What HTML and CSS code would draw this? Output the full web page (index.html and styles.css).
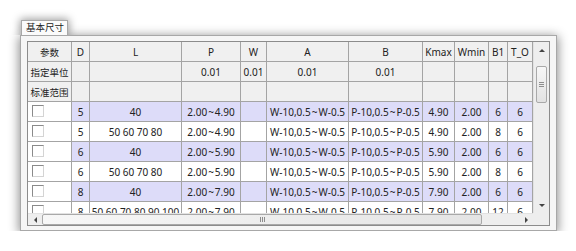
FILE: index.html
```html
<!DOCTYPE html>
<html>
  <head>
    <meta charset="utf-8">
    <title>基本尺寸</title>
    <link rel="stylesheet" href="styles.css">
  </head>
  <body>
    <div class="window">
      <div class="tab">基本尺寸</div>
      <div class="panel">
        <div class="view">
          <div class="cells">
            <table>
              <colgroup>
                <col class="c-chk"><col class="c-d"><col class="c-l"><col class="c-p"><col class="c-w"><col class="c-a">
                <col class="c-b"><col class="c-kmax"><col class="c-wmin"><col class="c-b1"><col class="c-to">
              </colgroup>
              <tr class="head">
                <td class="cjk">参数</td><td>D</td><td>L</td><td>P</td><td>W</td><td>A</td><td>B</td><td>Kmax</td><td>Wmin</td><td>B1</td><td>T_O</td>
              </tr>
              <tr class="head">
                <td class="cjk">指定单位</td><td></td><td></td><td>0.01</td><td>0.01</td><td>0.01</td><td>0.01</td><td></td><td></td><td></td><td></td>
              </tr>
              <tr class="head">
                <td class="cjk">标准范围</td><td></td><td></td><td></td><td></td><td></td><td></td><td></td><td></td><td></td><td></td>
              </tr>
              <tr class="odd">
                <td class="chk"><span class="box"></span></td><td>5</td><td>40</td><td>2.00&#8202;~&#8202;4.90</td><td></td><td>W-10,0.5&#8202;~&#8202;W-0.5</td><td>P-10,0.5&#8202;~&#8202;P-0.5</td><td>4.90</td><td>2.00</td><td>6</td><td>6</td>
              </tr>
              <tr>
                <td class="chk"><span class="box"></span></td><td>5</td><td>50 60 70 80</td><td>2.00&#8202;~&#8202;4.90</td><td></td><td>W-10,0.5&#8202;~&#8202;W-0.5</td><td>P-10,0.5&#8202;~&#8202;P-0.5</td><td>4.90</td><td>2.00</td><td>8</td><td>6</td>
              </tr>
              <tr class="odd">
                <td class="chk"><span class="box"></span></td><td>6</td><td>40</td><td>2.00&#8202;~&#8202;5.90</td><td></td><td>W-10,0.5&#8202;~&#8202;W-0.5</td><td>P-10,0.5&#8202;~&#8202;P-0.5</td><td>5.90</td><td>2.00</td><td>6</td><td>6</td>
              </tr>
              <tr>
                <td class="chk"><span class="box"></span></td><td>6</td><td>50 60 70 80</td><td>2.00&#8202;~&#8202;5.90</td><td></td><td>W-10,0.5&#8202;~&#8202;W-0.5</td><td>P-10,0.5&#8202;~&#8202;P-0.5</td><td>5.90</td><td>2.00</td><td>8</td><td>6</td>
              </tr>
              <tr class="odd">
                <td class="chk"><span class="box"></span></td><td>8</td><td>40</td><td>2.00&#8202;~&#8202;7.90</td><td></td><td>W-10,0.5&#8202;~&#8202;W-0.5</td><td>P-10,0.5&#8202;~&#8202;P-0.5</td><td>7.90</td><td>2.00</td><td>6</td><td>6</td>
              </tr>
              <tr>
                <td class="chk"><span class="box"></span></td><td>8</td><td>50 60 70 80 90 100</td><td>2.00&#8202;~&#8202;7.90</td><td></td><td>W-10,0.5&#8202;~&#8202;W-0.5</td><td>P-10,0.5&#8202;~&#8202;P-0.5</td><td>7.90</td><td>2.00</td><td>12</td><td>6</td>
              </tr>
            </table>
          </div>
          <div class="vbar">
            <span class="btn"><span class="arrow up"></span></span>
            <div class="track"><div class="thumb"><i></i><i></i><i></i></div></div>
            <span class="btn"><span class="arrow down"></span></span>
          </div>
          <div class="hbar">
            <span class="btn"><span class="arrow left"></span></span>
            <div class="track"><div class="thumb"><i></i><i></i><i></i></div></div>
            <span class="btn"><span class="arrow right"></span></span>
          </div>
          <div class="corner"></div>
        </div>
      </div>
    </div>
  </body>
</html>
```

FILE: styles.css
```css
html {height:100%;}
body {margin:0; background:#fff; font-family:"Noto Sans","Noto Sans CJK SC",sans-serif; font-size:10px; color:#222;}

.window {margin:20px 0 0 20px; width:537px;}
.tab {position:relative; z-index:2; width:41px; height:14px; margin-left:1px; background:#fbfbfb; border:1px solid #a8a8a8; border-bottom:0; font-size:9.5px; line-height:14px; padding-left:4px; box-shadow:0 0 8px 1px rgba(0,0,0,.4); clip-path:inset(-14px -14px 0 -14px);}
.panel {position:relative; z-index:1; background:#f6f6f6; border:1px solid #a8a8a8; padding:5px 6px 4px 6px; box-shadow:0 2px 10px 1px rgba(0,0,0,.45);}

.view {display:grid; grid-template-columns:505px 16px; grid-template-rows:171px 12px; border:1px solid #8c8c8c; background:#fff;}
.cells {overflow:hidden;}

table {table-layout:fixed; width:505px; border-collapse:separate; border-spacing:0;}
td {height:19px; padding:0; border-right:1px solid #a4a4a4; border-bottom:1px solid #a4a4a4; text-align:center; white-space:nowrap; overflow:hidden; vertical-align:middle;}
.c-chk {width:44px;} .c-d {width:18px;} .c-l {width:92px;} .c-p {width:59px;} .c-w {width:26px;} .c-a {width:82px;}
.c-b {width:74px;} .c-kmax {width:32px;} .c-wmin {width:34px;} .c-b1 {width:19px;} .c-to {width:25px;}

.head td {background:#f0f0f0;}
.head .cjk {font-size:9.5px;}
.odd td {background:#dddcf9;}
.odd td.chk {background:#fff;}
td.chk {text-align:left; padding-left:4px;}
.box {display:block; width:10px; height:10px; border:1px solid; border-color:#8a8a8a #d4d4d4 #d4d4d4 #8a8a8a; background:#fff; margin-top:-2px;}

.vbar, .hbar {display:flex; background:#eeeeee;}
.vbar {flex-direction:column; border-left:1px solid #e2e2e2;}
.hbar {border-top:1px solid #e2e2e2;}
.corner {background:#eeeeee;}
.btn {display:flex; align-items:center; justify-content:center; flex:none;}
.vbar .btn {height:16px;}
.hbar .btn {width:14px;}
.track {flex:1; display:flex;}
.vbar .track {padding-top:8px;}
.thumb {display:flex; align-items:center; justify-content:center; gap:1px; border:1px solid #a9a9a9; border-radius:2px; background:linear-gradient(#f7f7f7,#e2e2e2);}
.vbar .thumb {width:9px; height:35px; margin-left:2px; flex-direction:column;}
.hbar .thumb {width:438px; height:9px; background:linear-gradient(90deg,#f7f7f7,#e4e4e4);}
.vbar .thumb i {display:block; width:5px; height:1px; background:#8e8e8e;}
.hbar .thumb i {display:block; width:1px; height:5px; background:#8e8e8e;}

.arrow {width:0; height:0; border:3px solid transparent;}
.arrow.up {border-bottom-color:#444; border-top-width:0;}
.arrow.down {border-top-color:#444; border-bottom-width:0;}
.arrow.left {border-right-color:#444; border-left-width:0;}
.arrow.right {border-left-color:#444; border-right-width:0;}
```
